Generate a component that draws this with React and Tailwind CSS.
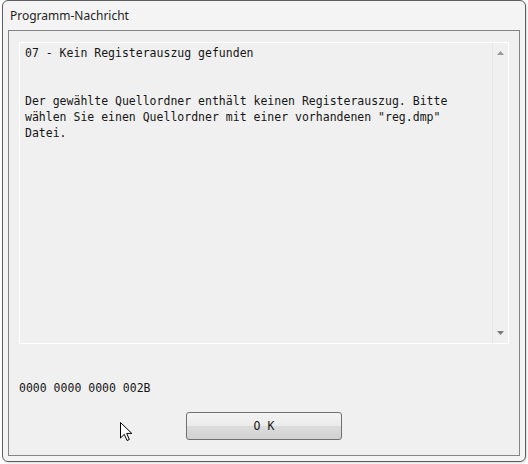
export default function App() {
  const mono = { fontFamily: '"DejaVu Sans Mono", "Liberation Mono", monospace' };
  return (
    <div className="relative w-[528px] h-[464px] bg-white overflow-hidden">
      <div className="ml-[2px] w-[524px] h-[462px] border border-[#5e5e5e] rounded-[6px] bg-[#f4f4f4] flex flex-col shadow-[1px_1px_2px_rgba(0,0,0,0.15)]">
        <div
          className="h-[29px] pl-[7px] pt-[7px] text-[12px] leading-[16px] text-[#1e1e1e]"
          style={{ fontFamily: '"Noto Sans", "Open Sans", sans-serif' }}
        >
          Programm-Nachricht
        </div>
        <div className="mx-[5px] h-[426px] border border-[#858585] bg-[#f0f0f0] flex flex-col">
          <div className="mt-[11px] mx-[10px] h-[302px] border border-white flex">
            <div
              className="flex-1 pl-[5px] pt-[2px] text-[11.5px] leading-[16px] text-[#161616] whitespace-pre"
              style={mono}
            >
              {"07 - Kein Registerauszug gefunden\n\n\nDer gewählte Quellordner enthält keinen Registerauszug. Bitte\nwählen Sie einen Quellordner mit einer vorhandenen \"reg.dmp\"\nDatei."}
            </div>
            <div className="w-[16px] border-l border-[#e6e6e6] bg-[#f0f0f0] flex flex-col justify-between items-center py-[8px]">
              <svg width="7" height="4" viewBox="0 0 7 4">
                <path d="M3.5 0 L7 4 L0 4 Z" fill="#9a9a9a" />
              </svg>
              <svg width="7" height="4" viewBox="0 0 7 4">
                <path d="M0 0 L7 0 L3.5 4 Z" fill="#7a7a7a" />
              </svg>
            </div>
          </div>
          <div className="mt-[36px] ml-[10px] h-[16px] text-[11.5px] leading-[16px] text-[#161616]" style={mono}>
            0000 0000 0000 002B
          </div>
          <div className="mt-[16px] flex justify-center">
            <div className="w-[156px] h-[28px] border border-[#707070] rounded-[3px] bg-[linear-gradient(to_bottom,#f3f3f3_0%,#ebebeb_50%,#dddddd_50%,#d0d0d0_100%)] flex items-center justify-center">
              <span className="text-[11.5px] leading-[16px] text-[#161616] whitespace-pre" style={mono}>O K</span>
            </div>
          </div>
        </div>
      </div>
      <svg className="absolute left-[119px] top-[421px]" width="14" height="21" viewBox="0 0 14 21">
        <path d="M1.5 1.5 V17 L5.3 13.3 L8 19.5 L10.3 18.5 L7.7 12.4 H12.8 Z" fill="#ffffff" stroke="#000000" strokeWidth="1" strokeLinejoin="miter" />
      </svg>
    </div>
  );
}
